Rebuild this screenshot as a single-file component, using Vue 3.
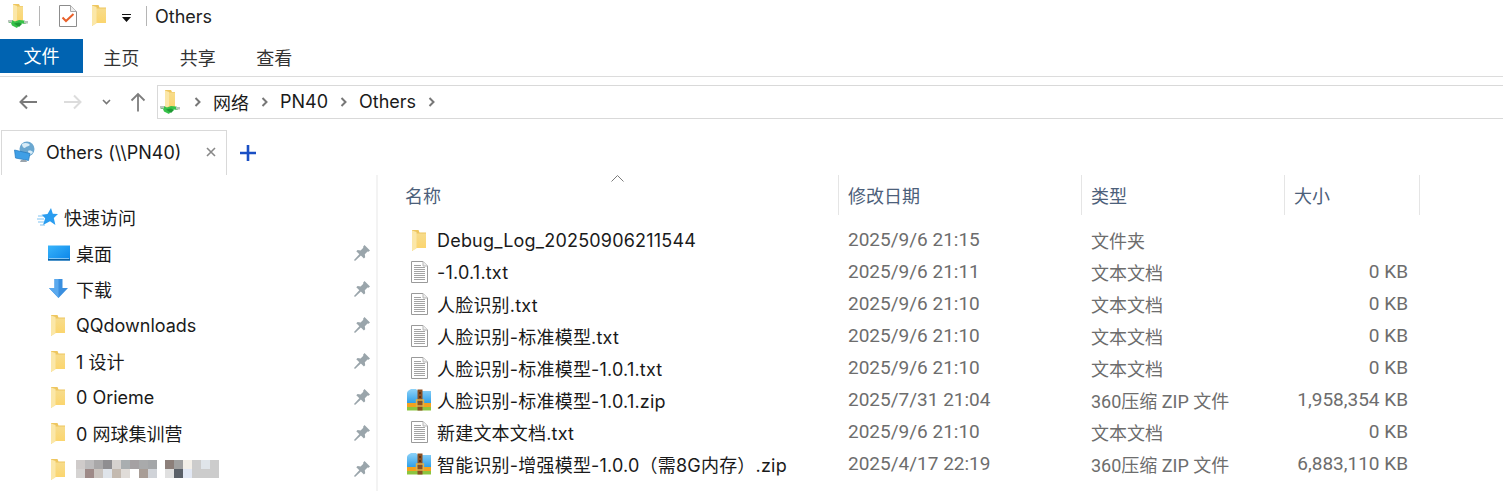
<template>
  <div class="explorer">
    <svg class="sprite" width="0" height="0" aria-hidden="true">
      <defs>
        <linearGradient id="folderFront" x1="0" y1="0" x2="0" y2="1">
          <stop offset="0" stop-color="#f7dc8c" />
          <stop offset="1" stop-color="#fbd56e" />
        </linearGradient>
        <linearGradient id="zipBlue" x1="0" y1="0" x2="0" y2="1">
          <stop offset="0" stop-color="#8fd3f8" />
          <stop offset="1" stop-color="#2f9fe8" />
        </linearGradient>
        <linearGradient id="desk" x1="0" y1="0" x2="1" y2="1">
          <stop offset="0" stop-color="#38b4fb" />
          <stop offset="1" stop-color="#0a84e8" />
        </linearGradient>
        <symbol id="i-folder" viewBox="0 0 14 21">
          <path d="M0 0h6.500l1 2.500H14V18H4L0 21z" fill="#eec65f" />
          <path d="M4 3.500h10V18H4z" fill="url(#folderFront)" />
          <path d="M0 .5 4.500 2v16.500L0 21z" fill="#fbe7a8" />
        </symbol>
        <symbol id="i-netfolder" viewBox="0 0 20 24">
          <path d="M5 0h6l1 2h3v16H5z" fill="#eec65f" />
          <path d="M8 2.500h7V18H8z" fill="url(#folderFront)" />
          <path d="M5 .5 9 2v14l-4 3z" fill="#fbe7a8" />
          <path d="M0 16h4l3 1.500L11 16l5 .5 4 1.500-3 2-3-.5-3 1.500-2 3-5-2.500-1-2.500H1z" fill="#37c24a" />
          <path d="M6 19.500l5-1 3 1.500-3 3z" fill="#1f9a34" />
          <path d="M0 16h4v2.500H0zM16 17h4v2.500h-4z" fill="#b9c4bc" />
        </symbol>
        <symbol id="i-doc" viewBox="0 0 18 22">
          <path d="M.5.500h11l6 6v15H.5z" fill="#fff" stroke="#8c8c8c" />
          <path d="M11.500.5v6h6" fill="#ededed" stroke="#a8a8a8" />
          <path d="M3.500 12.500l3.500 3.500 7.500-7" fill="none" stroke="#e8602a" stroke-width="2" />
        </symbol>
        <symbol id="i-txt" viewBox="0 0 17 22">
          <path d="M.5.500h11.500l4.500 4.500v16.500H.5z" fill="#fff" stroke="#9a9a9a" />
          <path d="M12 .5V5h4.500" fill="#eee" stroke="#b5b5b5" />
          <path d="M3 4.500h7M3 6.500h11M3 8.500h11M3 10.500h11M3 12.500h11M3 14.500h11M3 16.500h11M3 18.500h11" stroke="#a3a3a3" />
        </symbol>
        <symbol id="i-zip" viewBox="0 0 24 22">
          <path d="M0 4Q0 2.500 1.500 1.500L4 0h5l2 2h13v12H0z" fill="url(#zipBlue)" />
          <path d="M0 14h24v4H0z" fill="#f3a11d" />
          <path d="M0 18h24v3.500H0z" fill="#8cc540" />
          <path d="M15.500 .5h-5v21h5z" fill="#8a4f22" />
          <path d="M9.500 11h7v6h-7z" fill="none" stroke="#e0b04a" stroke-width="1.400" />
          <path d="M12 3h2v2h-2zM12 7h2v2h-2z" fill="#5c3212" />
        </symbol>
        <symbol id="i-pin" viewBox="0 0 16 16">
          <path d="M10.500 0 16 5.500l-1.500 1.200-1-.2-2.700 2.700.4 3-1.300 1.300-3-3L1 16l-1-1 5.300-5.700-3-3 1.300-1.300 3 .4 2.700-2.700-.2-1z" fill="#9aa5ab" />
        </symbol>
      </defs>
    </svg>

    <div class="titlebar">
      <svg class="ic-net"><use href="#i-netfolder" /></svg>
      <span class="vline first"></span>
      <svg class="ic-check"><use href="#i-doc" /></svg>
      <svg class="ic-qfolder"><use href="#i-folder" /></svg>
      <svg class="ic-drop" viewBox="0 0 9 8"><path d="M0 0h9v1H0zM0 3h9L4.500 8z" fill="#111" /></svg>
      <span class="vline second"></span>
      <span class="title">Others</span>
    </div>

    <div class="ribbon">
      <div class="file-tab">文件</div>
      <div class="rtab">主页</div>
      <div class="rtab">共享</div>
      <div class="rtab">查看</div>
    </div>

    <div class="navbar">
      <svg class="nav back" viewBox="0 0 20 16"><path d="M19 8H3M9 1.500 2.500 8 9 14.500" fill="none" stroke="#7a7a7a" stroke-width="2" /></svg>
      <svg class="nav fwd" viewBox="0 0 20 16"><path d="M1 8h16M11 1.500 17.500 8 11 14.500" fill="none" stroke="#dcdcdc" stroke-width="2" /></svg>
      <svg class="nav chev" viewBox="0 0 9 6"><path d="M1 1l3.500 3.500L8 1" fill="none" stroke="#777" stroke-width="1.600" /></svg>
      <svg class="nav up" viewBox="0 0 16 20"><path d="M8 19.500V2M1.500 8.500 8 2l6.500 6.500" fill="none" stroke="#7d7d7d" stroke-width="1.800" /></svg>
      <div class="address">
        <svg class="ic-addr"><use href="#i-netfolder" /></svg>
        <template v-for="part in crumbs" :key="part">
          <svg class="crumb-sep" viewBox="0 0 7 10"><path d="M1.500 1l4 4-4 4" fill="none" stroke="#777" stroke-width="2" /></svg>
          <span class="crumb">{{ part }}</span>
        </template>
        <svg class="crumb-sep" viewBox="0 0 7 10"><path d="M1.500 1l4 4-4 4" fill="none" stroke="#777" stroke-width="2" /></svg>
      </div>
    </div>

    <div class="tabbar">
      <div class="tab">
        <svg class="ic-globe" viewBox="0 0 22 22">
          <circle cx="13" cy="8" r="7.500" fill="#6aa7d0" />
          <path d="M8 3c3-2 7-1 8 1-2 2-4 1-5 3-2 0-3-2-3-4zM14 10c2-1 4 0 5 1-1 2-3 3-4 3z" fill="#d8ecf7" />
          <path d="M.5 9 16 12.500l-1.500 7L1.500 17z" fill="#3f9fe6" stroke="#2479bb" stroke-width=".7" />
          <path d="M7 19h5l1 2H6z" fill="#9aa4ac" />
        </svg>
        <span class="tab-label">Others (\\PN40)</span>
        <svg class="tab-close" viewBox="0 0 10 10"><path d="M1 1l8 8M9 1l-8 8" stroke="#888" stroke-width="1.600" /></svg>
      </div>
      <svg class="tab-add" viewBox="0 0 16 16"><path d="M8 0v16M0 8h16" stroke="#1a4fc4" stroke-width="2.600" /></svg>
    </div>

    <div class="body">
      <aside class="side">
        <div class="side-row quick">
          <svg class="ic-star" viewBox="0 0 21 19">
            <path d="M14 0l1.800 5.800 5.200.3-4.200 3.800 1.600 7.100-5.400-3.700L6 17l2.200-6.700L4.500 6.700l6-.7z" fill="#2a9df0" />
            <path d="M1 8h5M0 11h7M1 14h6M3 17h5" stroke="#7fc3f2" stroke-width="1" />
          </svg>
          <span>快速访问</span>
        </div>
        <div v-for="item in places" :key="item.label" class="side-row place">
          <div class="place-icon">
            <svg v-if="item.icon === 'desk'" class="ic-desk" viewBox="0 0 22 15">
              <path d="M0 0h22v15H0z" fill="url(#desk)" />
              <path d="M0 13.500h22V15H0z" fill="#0c5f9f" />
              <path d="M1 12.500h20v.6H1z" fill="#cfe9fb" />
            </svg>
            <svg v-else-if="item.icon === 'down'" class="ic-down" viewBox="0 0 19 20">
              <path d="M5.500 0h8v9H19l-9.500 10L0 9h5.500z" fill="#3a8fdf" />
              <path d="M5.500 0h4v19L0 9h5.500z" fill="#5aa9ee" />
            </svg>
            <svg v-else class="ic-folder"><use href="#i-folder" /></svg>
          </div>
          <span v-if="item.label" class="place-label">{{ item.label }}</span>
          <div v-else class="mosaic-wrap">
            <div class="mosaic first-block">
              <i v-for="(c, i) in mosaicA" :key="i" :style="{ background: c }"></i>
            </div>
            <div class="mosaic second-block">
              <i v-for="(c, i) in mosaicB" :key="i" :style="{ background: c }"></i>
            </div>
          </div>
          <svg class="ic-pin"><use href="#i-pin" /></svg>
        </div>
      </aside>

      <main class="list">
        <div class="sort-arrow">
          <svg viewBox="0 0 13 7"><path d="M.5 6.500l6-6 6 6" fill="none" stroke="#7a7a7a" /></svg>
        </div>
        <div class="head">
          <div class="hcell name">名称</div>
          <div class="hcell">修改日期</div>
          <div class="hcell">类型</div>
          <div class="hcell">大小</div>
        </div>
        <div v-for="f in files" :key="f.name" class="row">
          <div class="cell-name">
            <div class="file-icon">
              <svg v-if="f.kind === 'dir'" class="fi-dir"><use href="#i-folder" /></svg>
              <svg v-else-if="f.kind === 'txt'" class="fi-txt"><use href="#i-txt" /></svg>
              <svg v-else class="fi-zip"><use href="#i-zip" /></svg>
            </div>
            <span class="file-name">{{ f.name }}</span>
          </div>
          <div class="cell-meta date">{{ f.date }}</div>
          <div class="cell-meta">{{ f.type }}</div>
          <div class="cell-meta size">{{ f.size }}</div>
        </div>
      </main>
    </div>
  </div>
</template>

<script setup>
const crumbs = ['网络', 'PN40', 'Others']

const places = [
  { label: '桌面', icon: 'desk' },
  { label: '下载', icon: 'down' },
  { label: 'QQdownloads', icon: 'folder' },
  { label: '1 设计', icon: 'folder' },
  { label: '0 Orieme', icon: 'folder' },
  { label: '0 网球集训营', icon: 'folder' },
  { label: '', icon: 'folder' }
]

// blurred-out folder name in the reference
const mosaicA = [
  '#cfcbca', '#bdbcbd', '#a9a8a9', '#8f8e91', '#d6d2cf', '#a9aeb0', '#a5a1a3', '#a9aaab', '#a4a6a8',
  '#d5d3d2', '#9e8a88', '#cbc5c0', '#dfe4ea', '#c4bab0', '#e0dcd8', '#ffffff', '#a89d96', '#d0d3d8'
]
const mosaicB = [
  '#8c7f7a', '#a0a0a0', '#f3efe8', '#cccccc', '#e0e5ea', '#cccccc',
  '#e0e0e0', '#5a6068', '#e2e8f4', '#cccccc', '#cccccc', '#cccccc'
]

const files = [
  { name: 'Debug_Log_20250906211544', kind: 'dir', date: '2025/9/6 21:15', type: '文件夹', size: '' },
  { name: '-1.0.1.txt', kind: 'txt', date: '2025/9/6 21:11', type: '文本文档', size: '0 KB' },
  { name: '人脸识别.txt', kind: 'txt', date: '2025/9/6 21:10', type: '文本文档', size: '0 KB' },
  { name: '人脸识别-标准模型.txt', kind: 'txt', date: '2025/9/6 21:10', type: '文本文档', size: '0 KB' },
  { name: '人脸识别-标准模型-1.0.1.txt', kind: 'txt', date: '2025/9/6 21:10', type: '文本文档', size: '0 KB' },
  { name: '人脸识别-标准模型-1.0.1.zip', kind: 'zip', date: '2025/7/31 21:04', type: '360压缩 ZIP 文件', size: '1,958,354 KB' },
  { name: '新建文本文档.txt', kind: 'txt', date: '2025/9/6 21:10', type: '文本文档', size: '0 KB' },
  { name: '智能识别-增强模型-1.0.0（需8G内存）.zip', kind: 'zip', date: '2025/4/17 22:19', type: '360压缩 ZIP 文件', size: '6,883,110 KB' }
]
</script>

<style>
html,
body {
  margin: 0;
  background: #fff;
  overflow: hidden;
}
</style>

<style scoped>
.explorer {
  width: 1503px;
  height: 491px;
  overflow: hidden;
  background: #fff;
  color: #1a1a1a;
  font-family: "Inter", "Noto Sans CJK SC", sans-serif;
  font-size: 18px;
}

.sprite {
  position: absolute;
}

.titlebar {
  height: 39px;
  display: flex;
  align-items: center;
  box-sizing: border-box;
  padding: 0 0 8px 8px;
}

.ic-net {
  width: 20px;
  height: 24px;
}

.vline {
  width: 1px;
  height: 20px;
  background: #b5b5b5;
}

.vline.first {
  margin-left: 11px;
}

.ic-check {
  width: 18px;
  height: 22px;
  margin-left: 19px;
}

.ic-qfolder {
  width: 14px;
  height: 21px;
  margin-left: 15px;
}

.ic-drop {
  width: 9px;
  height: 8px;
  margin-left: 16px;
  margin-top: 5px;
}

.vline.second {
  margin-left: 15px;
}

.title {
  margin-left: 8px;
  margin-top: 2px;
  font-size: 18px;
  color: #222;
}

.ribbon {
  height: 37px;
  display: flex;
  border-bottom: 1px solid #dcdcdc;
}

.file-tab {
  width: 83px;
  height: 34px;
  padding-bottom: 2px;
  box-sizing: border-box;
  background: #0063b1;
  color: #fff;
  display: flex;
  align-items: center;
  justify-content: center;
}

.rtab {
  width: 76.500px;
  height: 36px;
  display: flex;
  align-items: center;
  justify-content: center;
  color: #333;
}

.navbar {
  height: 48px;
  display: flex;
  align-items: center;
  padding-left: 18px;
  box-sizing: border-box;
  padding-top: 1px;
}

.nav {
  flex: none;
}

.back {
  width: 20px;
  height: 16px;
}

.fwd {
  width: 20px;
  height: 16px;
  margin-left: 25px;
}

.chev {
  width: 9px;
  height: 6px;
  margin-left: 19px;
}

.up {
  width: 16px;
  height: 20px;
  margin-left: 19px;
}

.address {
  flex: 1;
  height: 34px;
  margin-left: 11px;
  border: 1px solid #d9d9d9;
  border-right: none;
  box-sizing: border-box;
  display: flex;
  align-items: center;
  padding-left: 2px;
  color: #1a1a1a;
}

.ic-addr {
  width: 20px;
  height: 24px;
  margin-right: 2px;
}

.crumb-sep {
  width: 7px;
  height: 10px;
  margin: 0 12px;
  flex: none;
}

.tabbar {
  height: 50px;
  display: flex;
  align-items: flex-end;
  padding-left: 1px;
  box-sizing: border-box;
}

.tab {
  width: 226px;
  height: 45px;
  border: 1px solid #d9d9d9;
  border-bottom: none;
  box-sizing: border-box;
  display: flex;
  align-items: center;
  padding: 0 0 2px 12px;
}

.ic-globe {
  width: 22px;
  height: 22px;
  flex: none;
}

.tab-label {
  margin-left: 10px;
  color: #1a1a1a;
  white-space: nowrap;
}

.tab-close {
  width: 10px;
  height: 10px;
  margin-left: 25px;
  flex: none;
}

.tab-add {
  width: 16px;
  height: 16px;
  margin: 0 0 14px 13px;
}

.body {
  display: flex;
}

.side {
  width: 376px;
  flex: none;
  border-right: 2px solid #f3f3f3;
  padding-top: 24px;
  height: 292px;
}

.side-row {
  height: 36px;
  display: flex;
  align-items: center;
}

.quick {
  padding-left: 37px;
}

.ic-star {
  width: 21px;
  height: 19px;
  margin-right: 6px;
}

.place {
  padding-left: 47px;
}

.place-icon {
  width: 29px;
  display: flex;
  align-items: center;
}

.ic-desk {
  width: 22px;
  height: 16px;
  margin-left: 1px;
}

.ic-down {
  width: 19px;
  height: 20px;
  margin-left: 2px;
}

.ic-folder {
  width: 14px;
  height: 21px;
  margin-left: 4px;
}

.place-label {
  flex: 1;
}

.mosaic-wrap {
  flex: 1;
  display: flex;
  gap: 8px;
}

.mosaic {
  display: grid;
  grid-auto-rows: 9px;
}

.mosaic.first-block {
  grid-template-columns: repeat(9, 9px);
}

.mosaic.second-block {
  grid-template-columns: repeat(6, 9px);
}

.ic-pin {
  width: 16px;
  height: 16px;
  margin-right: 6px;
}

.list {
  flex: 1;
  position: relative;
}

.sort-arrow {
  position: absolute;
  left: 233px;
  top: 0;
}

.sort-arrow svg {
  display: block;
  width: 13px;
  height: 7px;
}

.head,
.row {
  display: grid;
  grid-template-columns: 460px 243px 203px 136px;
}

.head {
  height: 40px;
  margin-bottom: 9px;
  color: #4c607a;
}

.hcell {
  border-left: 1px solid #e5e5e5;
  padding-left: 9px;
  display: flex;
  align-items: center;
}

.hcell.name {
  border-left: none;
  padding-left: 27px;
}

.head .hcell:last-child {
  border-right: 1px solid #e5e5e5;
}

.row {
  height: 32px;
  align-items: center;
}

.cell-name {
  display: flex;
  align-items: center;
  padding-left: 23px;
  white-space: nowrap;
  color: #1a1a1a;
}

.file-name {
  letter-spacing: 0.2px;
}

.file-icon {
  width: 36px;
  display: flex;
  justify-content: center;
  flex: none;
}

.fi-dir {
  width: 14px;
  height: 21px;
}

.fi-txt {
  width: 17px;
  height: 22px;
}

.fi-zip {
  width: 24px;
  height: 22px;
}

.cell-meta {
  padding: 0 0 1px 10px;
  color: #6d6d6d;
  font-family: "Roboto", "Noto Sans CJK SC", sans-serif;
  white-space: nowrap;
}

.cell-meta.date {
  font-size: 19px;
}

.cell-meta.size {
  font-size: 19px;
  text-align: right;
  padding-right: 12px;
}
</style>
